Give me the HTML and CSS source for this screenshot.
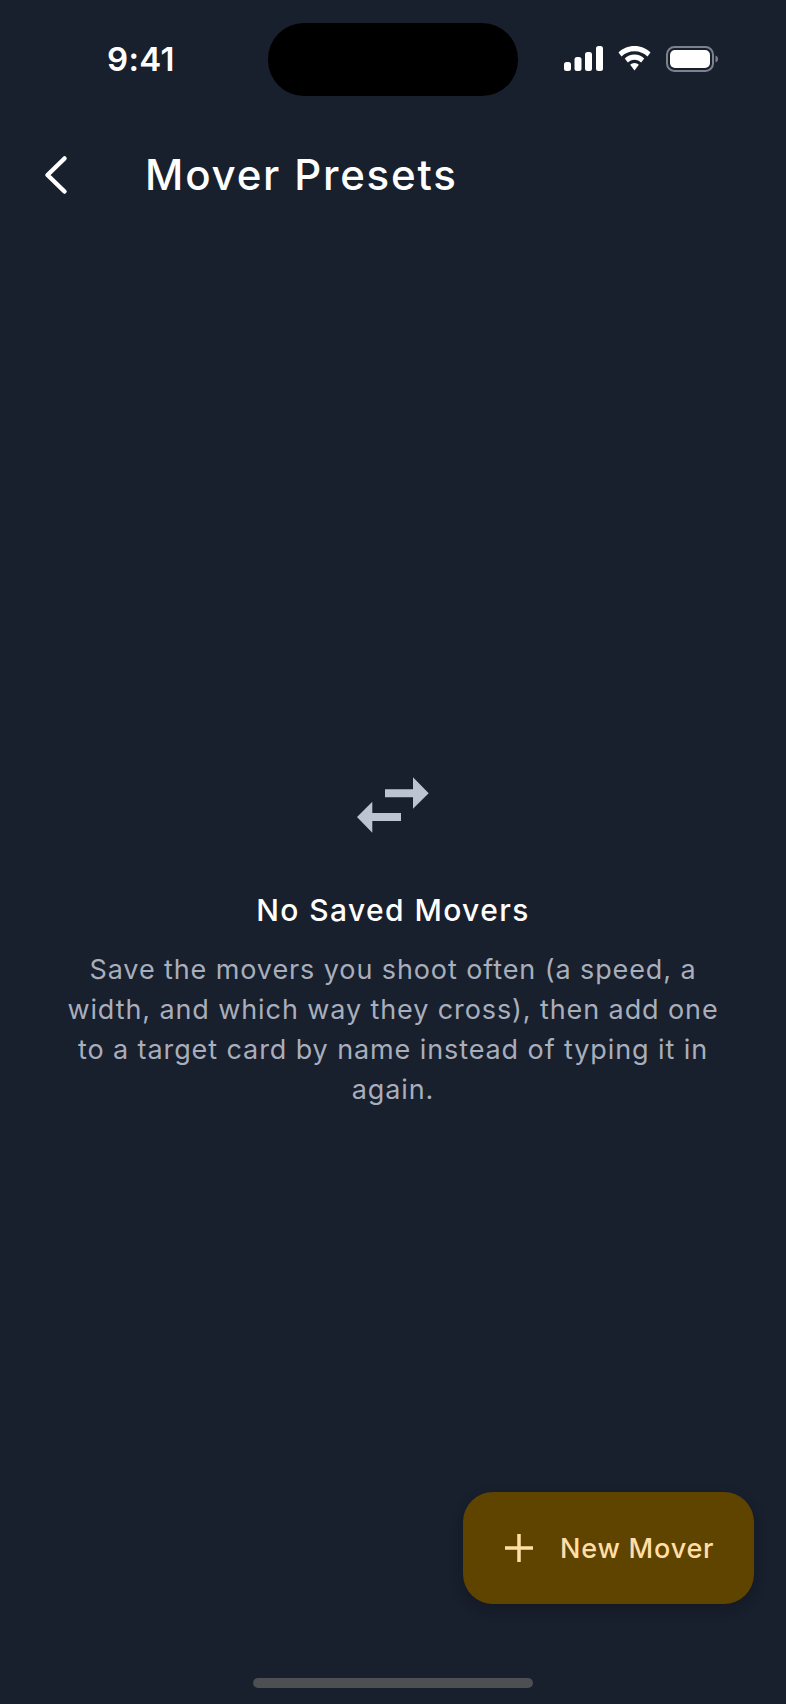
FILE: index.html
```html
<!DOCTYPE html>
<html lang="en">
<head>
    <meta charset="UTF-8">
    <title>Mover Presets</title>
    <link rel="stylesheet" href="styles.css">
</head>
<body>
<div class="phone">
    <div class="status">
        <span class="time">9:41</span>
        <div class="island"></div>
        <div class="status-icons">
            <svg class="signal" width="39" height="25" viewBox="0 0 39 25" fill="#fff">
                <rect x="0" y="16" width="7" height="9" rx="2.500"/>
                <rect x="10.5" y="11" width="7" height="14" rx="2.500"/>
                <rect x="21" y="6" width="7" height="19" rx="2.500"/>
                <rect x="32" y="0" width="7" height="25" rx="2.500"/>
            </svg>
            <svg class="wifi" width="33" height="25" viewBox="0 0 33 25" fill="#fff">
                <path d="M16.500 0C10 0 4.500 2.500 0.500 6.500L3.500 10.500C6.800 7.200 11.400 5.200 16.500 5.200S26.200 7.200 29.500 10.500L32.500 6.500C28.500 2.500 23 0 16.500 0Z"/>
                <path d="M16.500 8.500C12.700 8.500 9.300 10 6.800 12.500L9.800 16.500C11.500 14.800 13.900 13.700 16.500 13.700S21.500 14.800 23.200 16.500L26.200 12.500C23.700 10 20.300 8.500 16.500 8.500Z"/>
                <path d="M16.500 17C14.800 17 13.300 17.700 12.200 18.800L16.500 24.500L20.800 18.800C19.700 17.700 18.200 17 16.500 17Z"/>
            </svg>
            <svg class="battery" width="52" height="26" viewBox="0 0 52 26">
                <rect x="1" y="1" width="46" height="24" rx="7.500" fill="none" stroke="#7d838c" stroke-width="2"/>
                <rect x="4" y="4" width="40" height="18" rx="5" fill="#fff"/>
                <path d="M49.500 9.500C51 10 52 11.300 52 13S51 16 49.500 16.500Z" fill="#7d838c"/>
            </svg>
        </div>
    </div>

    <div class="header">
        <svg class="back" width="26" height="40" viewBox="0 0 26 40">
            <path d="M21.500 3.500L4.500 20L21.500 36.500" fill="none" stroke="#fff" stroke-width="4.500" stroke-linecap="round" stroke-linejoin="round"/>
        </svg>
        <h1 class="title">Mover Presets</h1>
    </div>

    <div class="empty">
        <svg class="empty-icon" width="72" height="56" viewBox="0 0 72 56" fill="#bcc3d1">
            <path d="M28 12.300H56V0.300L71.700 16.300L56 31.700V20.300H28Z"/>
            <path d="M44 36H15.300V24.700L0 40L15.300 55.700V44H44Z"/>
        </svg>
        <h2 class="empty-title">No Saved Movers</h2>
        <p class="empty-text">Save the movers you shoot often (a speed, a width, and which way they cross), then add one to a target card by name instead of typing it in again.</p>
    </div>

    <div class="fab">
        <svg width="28" height="28" viewBox="0 0 28 28">
            <path d="M14 0V28M0 14H28" stroke="#ffdea8" stroke-width="3.500"/>
        </svg>
        <span>New Mover</span>
    </div>

    <div class="home-bar"></div>
</div>
</body>
</html>
```

FILE: styles.css
```css
* {
    margin: 0;
    padding: 0;
    box-sizing: border-box;
}
body {
    background: #181f2d;
    font-family: "Inter", "Noto Sans", sans-serif;
}
.phone {
    width: 786px;
    height: 1704px;
    position: relative;
    display: flex;
    flex-direction: column;
    overflow: hidden;
    background: #181f2d;
}

/* status bar */
.status {
    height: 96px;
    padding: 23px 68px 0 107px;
    display: flex;
    justify-content: space-between;
    position: relative;
}
.time {
    margin-top: 16px;
    font-size: 33px;
    line-height: 40px;
    font-weight: 600;
    letter-spacing: 0.3px;
    color: #fff;
}
.island {
    position: absolute;
    left: 268px;
    top: 23px;
    width: 250px;
    height: 73px;
    border-radius: 36px;
    background: #000;
}
.status-icons {
    display: flex;
    align-items: flex-start;
    gap: 15px;
    margin-top: 23px;
}

/* header */
.header {
    display: flex;
    align-items: center;
    height: 80px;
    margin-top: 38px;
    padding-left: 43px;
}
.back {
    flex: none;
    margin-top: 2px;
}
.title {
    margin-left: 76px;
    font-size: 42px;
    font-weight: 500;
    letter-spacing: 1.8px;
    color: #fff;
}

/* empty state */
.empty {
    flex: 1;
    display: flex;
    flex-direction: column;
    align-items: center;
    padding: 563px 64px 0;
}
.empty-title {
    margin-top: 57px;
    font-size: 30px;
    line-height: 40px;
    font-weight: 550;
    letter-spacing: 1.4px;
    color: #fff;
}
.empty-text {
    margin-top: 20px;
    font-size: 27px;
    line-height: 40px;
    font-weight: 400;
    letter-spacing: 0.9px;
    text-align: center;
    color: #a8aebb;
}

/* floating button */
.fab {
    position: absolute;
    left: 463px;
    top: 1492px;
    width: 291px;
    height: 112px;
    padding-left: 42px;
    display: flex;
    align-items: center;
    gap: 27px;
    border-radius: 30px;
    background: #5f4400;
    box-shadow: 0 6px 14px rgba(0, 0, 0, 0.2);
    font-size: 27px;
    font-weight: 500;
    letter-spacing: 0.8px;
    color: #ffdea8;
}
.home-bar {
    position: absolute;
    left: 253px;
    top: 1678px;
    width: 280px;
    height: 10px;
    border-radius: 5px;
    background: #4d4f52;
}
```
